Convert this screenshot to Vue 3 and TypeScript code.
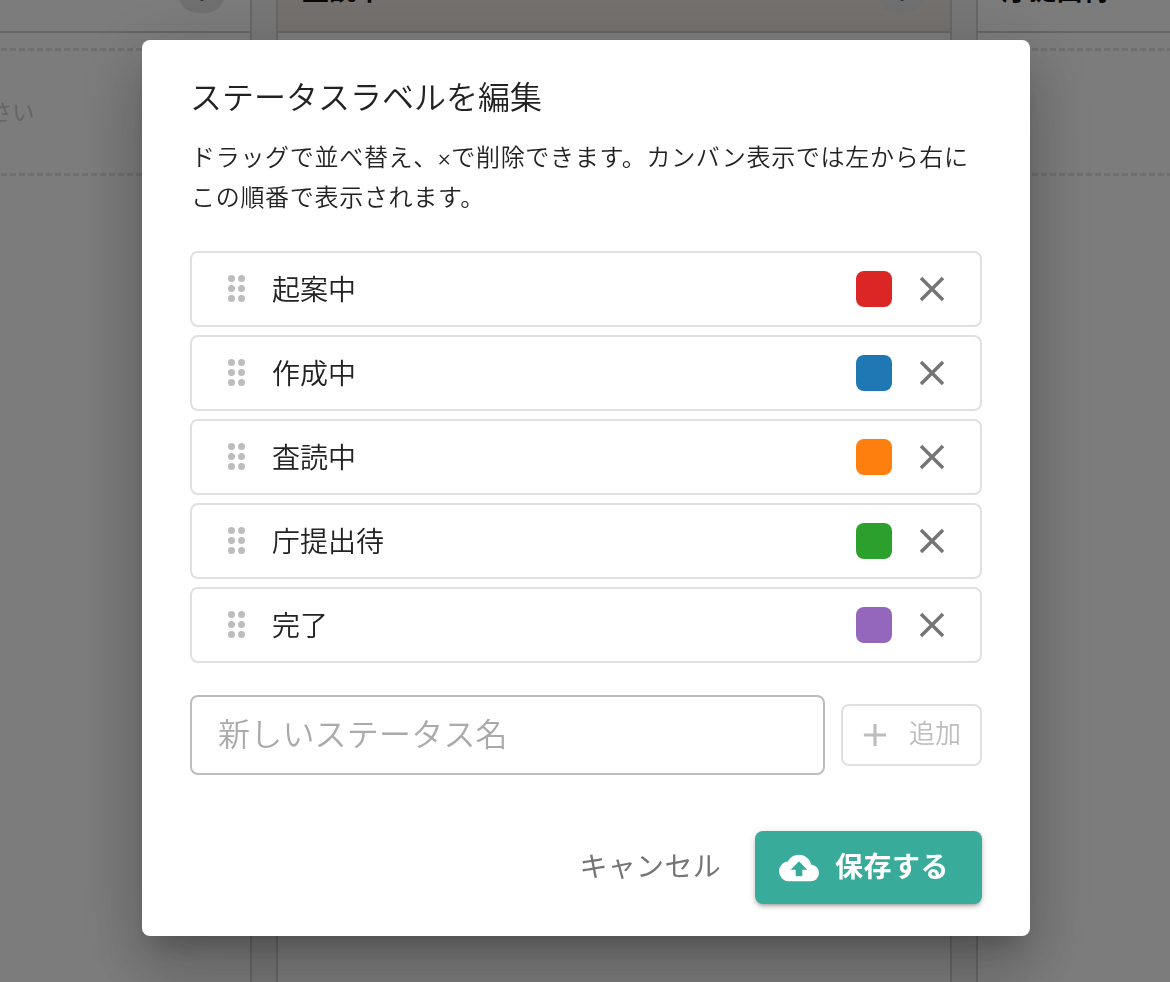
<script setup lang="ts">
interface Status { name: string; color: string }
const statuses: Status[] = [
  { name: '起案中', color: '#dc2626' },
  { name: '作成中', color: '#1f77b4' },
  { name: '査読中', color: '#ff7f0e' },
  { name: '庁提出待', color: '#2ca02c' },
  { name: '完了', color: '#9467bd' },
]
const dots = [0, 1, 2, 3, 4, 5]
</script>

<template>
  <div class="board">
    <section class="column">
      <header class="col-head">
        <h3>起案中</h3>
        <span class="round"><svg viewBox="0 0 24 24"><path d="M12,16A2,2 0 0,1 14,18A2,2 0 0,1 12,20A2,2 0 0,1 10,18A2,2 0 0,1 12,16M12,10A2,2 0 0,1 14,12A2,2 0 0,1 12,14A2,2 0 0,1 10,12A2,2 0 0,1 12,10M12,4A2,2 0 0,1 14,6A2,2 0 0,1 12,8A2,2 0 0,1 10,6A2,2 0 0,1 12,4Z" /></svg></span>
      </header>
      <div class="drop"><p>ここへ移動してください</p></div>
    </section>
    <section class="column warm">
      <header class="col-head">
        <h3>査読中</h3>
        <span class="round"><svg viewBox="0 0 24 24"><path d="M12,16A2,2 0 0,1 14,18A2,2 0 0,1 12,20A2,2 0 0,1 10,18A2,2 0 0,1 12,16M12,10A2,2 0 0,1 14,12A2,2 0 0,1 12,14A2,2 0 0,1 10,12A2,2 0 0,1 12,10M12,4A2,2 0 0,1 14,6A2,2 0 0,1 12,8A2,2 0 0,1 10,6A2,2 0 0,1 12,4Z" /></svg></span>
      </header>
      <div class="drop"></div>
    </section>
    <section class="column">
      <header class="col-head">
        <h3>庁提出待</h3>
        <span class="round"><svg viewBox="0 0 24 24"><path d="M12,16A2,2 0 0,1 14,18A2,2 0 0,1 12,20A2,2 0 0,1 10,18A2,2 0 0,1 12,16M12,10A2,2 0 0,1 14,12A2,2 0 0,1 12,14A2,2 0 0,1 10,12A2,2 0 0,1 12,10M12,4A2,2 0 0,1 14,6A2,2 0 0,1 12,8A2,2 0 0,1 10,6A2,2 0 0,1 12,4Z" /></svg></span>
      </header>
      <div class="drop"></div>
    </section>
  </div>

  <div class="overlay">
    <div class="dialog">
      <h2 class="title">ステータスラベルを編集</h2>
      <p class="desc">ドラッグで並べ替え、×で削除できます。カンバン表示では左から右にこの順番で表示されます。</p>
      <ul class="list">
        <li v-for="s in statuses" :key="s.name" class="row">
          <span class="handle"><i v-for="d in dots" :key="d"></i></span>
          <span class="name">{{ s.name }}</span>
          <span class="swatch" :style="{ background: s.color }"></span>
          <svg class="close" viewBox="0 0 24 24"><path d="M19,6.41L17.59,5L12,10.59L6.41,5L5,6.41L10.59,12L5,17.59L6.41,19L12,13.41L17.59,19L19,17.59L13.41,12L19,6.41Z" /></svg>
        </li>
      </ul>
      <div class="add">
        <input class="input" type="text" placeholder="新しいステータス名" />
        <button class="add-btn" type="button">
          <svg class="plus" viewBox="0 0 24 24"><path d="M19,13H13V19H11V13H5V11H11V5H13V11H19V13Z" /></svg>
          <span class="add-label">追加</span>
        </button>
      </div>
      <div class="actions">
        <button class="cancel" type="button">キャンセル</button>
        <button class="save" type="button">
          <svg class="cloud" viewBox="0 0 24 24"><path d="M14,13V17H10V13H7L12,8L17,13M19.35,10.03C18.67,6.59 15.64,4 12,4C9.11,4 6.6,5.64 5.35,8.03C2.34,8.36 0,10.9 0,14A6,6 0 0,0 6,20H19A5,5 0 0,0 24,15C24,12.36 21.95,10.22 19.35,10.03Z" /></svg>
          <span class="save-label">保存する</span>
        </button>
      </div>
    </div>
  </div>
</template>

<style>
html, body { margin: 0; height: 982px; overflow: hidden; background: #f5f5f5; }
</style>

<style scoped>
* { box-sizing: border-box; }
.board {
  display: flex;
  gap: 24px;
  margin: -40px 0 0 -424px;
  width: 2200px;
  height: 1022px;
  font-family: Roboto, "Noto Sans CJK JP", sans-serif;
}
.column {
  flex: 0 0 676px;
  background: #fff;
  border: 2px solid #d4d4d4;
  border-top: 0;
  border-bottom: 0;
}
.col-head {
  height: 73px;
  border-bottom: 2px solid #d0d0d0;
  display: flex;
  justify-content: space-between;
  padding: 0 25px 0 24px;
  background: #fff;
}
.warm .col-head { background: #f0e8e2; }
.col-head h3 { margin: 0; font-size: 27px; line-height: 62px; font-weight: 700; color: #111; }
.round {
  width: 47px;
  height: 46px;
  margin-top: 7px;
  border-radius: 20px;
  background: #e6e6e6;
  display: flex;
  align-items: center;
  justify-content: center;
}
.round svg { width: 32px; height: 32px; fill: #222; }
.drop {
  margin-top: 15px;
  height: 128px;
  border-top: 3px dashed #e4e4e4;
  border-bottom: 3px dashed #e4e4e4;
  display: flex;
  align-items: center;
  justify-content: center;
}
.drop p { margin: 0 0 5px; font-size: 22px; color: #d0d0d0; }

.overlay {
  position: fixed;
  inset: 0;
  background: rgba(0, 0, 0, 0.515);
  display: flex;
  align-items: flex-start;
  justify-content: flex-start;
  padding: 40px 0 0 142px;
  font-family: Roboto, "Noto Sans CJK JP", sans-serif;
}
.dialog {
  width: 888px;
  height: 896px;
  background: #fff;
  border-radius: 8px;
  padding: 0 48px;
  box-shadow: 0 18px 24px -11px rgba(0,0,0,.2), 0 38px 61px 5px rgba(0,0,0,.14), 0 14px 74px 13px rgba(0,0,0,.12);
}
.title {
  margin: 0;
  padding: 33px 0 0;
  font-size: 32px;
  line-height: 50px;
  font-weight: 350;
  color: #222;
}
.desc {
  margin: 15px 0 0;
  padding-left: 1px;
  font-size: 24px;
  line-height: 40px;
  letter-spacing: 0.7px;
  font-weight: 350;
  color: #222;
}
.list { list-style: none; margin: 33px 0 0; padding: 0; display: flex; flex-direction: column; gap: 8px; }
.row {
  height: 76px;
  border: 2px solid #e0e0e0;
  border-radius: 8px;
  display: flex;
  align-items: center;
  padding: 0 27px 0 36px;
}
.handle { width: 18px; margin-bottom: 2px; display: grid; grid-template-columns: 7px 7px; gap: 3px; }
.handle i { width: 7px; height: 7px; border-radius: 50%; background: #bdbdbd; }
.name { margin-left: 26px; padding-bottom: 2px; flex: 1; font-size: 28px; font-weight: 350; color: #222; }
.swatch { width: 36px; height: 36px; border-radius: 8px; }
.close { width: 42px; height: 42px; margin-left: 19px; fill: #757575; }
.add { display: flex; align-items: center; gap: 16px; margin-top: 32px; }
.input {
  width: 635px;
  height: 80px;
  border: 2px solid #bdbdbd;
  border-radius: 8px;
  padding: 0 26px;
  font: inherit;
  font-size: 32px;
  font-weight: 350;
  letter-spacing: 0.2px;
  outline: none;
  color: #333;
}
.input::placeholder { color: #aaa; opacity: 1; }
.add-btn {
  width: 141px;
  height: 62px;
  border: 2px solid #e0e0e0;
  border-radius: 8px;
  background: #fff;
  display: flex;
  align-items: center;
  padding: 0 0 0 13px;
  font: inherit;
  font-size: 26px;
  font-weight: 350;
  color: #bdbdbd;
}
.add-label { padding-bottom: 7px; }
.plus { width: 38px; height: 38px; fill: #bdbdbd; margin-right: 15px; }
.actions { display: flex; justify-content: flex-end; align-items: center; gap: 34px; margin-top: 56px; }
.cancel { border: 0; background: none; padding: 0 0 6px; font: inherit; font-size: 28px; font-weight: 400; letter-spacing: 0.3px; color: #757575; }
.save {
  width: 227px;
  height: 73px;
  border: 0;
  border-radius: 8px;
  background: #38ab9b;
  color: #fff;
  font: inherit;
  font-size: 28px;
  font-weight: 700;
  display: flex;
  align-items: center;
  padding: 0 0 0 24px;
  gap: 16px;
  box-shadow: 0 3px 3px -2px rgba(0,0,0,.2), 0 3px 4px rgba(0,0,0,.14), 0 1px 8px rgba(0,0,0,.12);
}
.save-label { padding-bottom: 6px; letter-spacing: 0.5px; }
.cloud { width: 40px; height: 40px; fill: #fff; }
</style>
